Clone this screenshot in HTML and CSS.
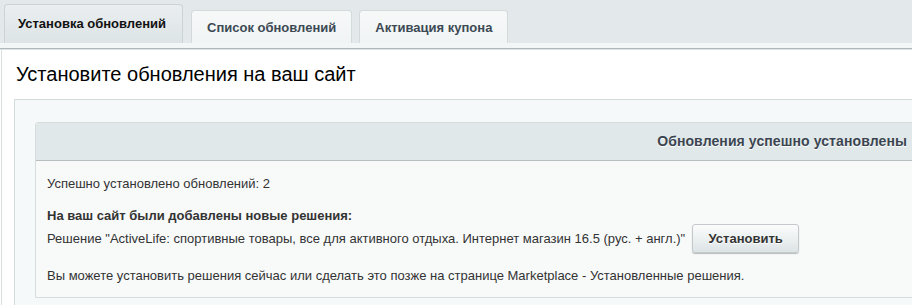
FILE: index.html
```html
<!DOCTYPE html>
<html lang="ru">
<head>
<meta charset="utf-8">
<title>Установка обновлений</title>
<link rel="stylesheet" href="styles.css">
</head>
<body>
<div class="tabs-bar">
  <div class="tab tab-active">Установка обновлений</div>
  <div class="tab">Список обновлений</div>
  <div class="tab">Активация купона</div>
</div>
<div class="tabs-strip"></div>
<div class="content">
  <h1 class="title">Установите обновления на ваш сайт</h1>
  <div class="outer-box">
    <div class="inner-box">
      <div class="inner-head">Обновления успешно установлены</div>
      <div class="inner-body">
        <p class="line">Успешно установлено обновлений: 2</p>
        <p class="line line-bold">На ваш сайт были добавлены новые решения:</p>
        <div class="solution-row">
          <span>Решение "ActiveLife: спортивные товары, все для активного отдыха. Интернет магазин 16.5 (рус. + англ.)"</span>
          <button class="btn" type="button">Установить</button>
        </div>
        <p class="line line-note">Вы можете установить решения сейчас или сделать это позже на странице Marketplace - Установленные решения.</p>
      </div>
    </div>
  </div>
</div>
</body>
</html>
```
FILE: styles.css
```css
html, body {
  margin: 0;
  padding: 0;
  background: #ffffff;
  font-family: "Liberation Sans", Arial, sans-serif;
  overflow: hidden;
}

.tabs-bar {
  display: flex;
  align-items: flex-end;
  gap: 7px;
  height: 43px;
  padding-left: 4px;
  background: #e3e9eb;
  box-sizing: border-box;
}

.tab {
  box-sizing: border-box;
  height: 33px;
  padding: 0 15px;
  display: flex;
  align-items: center;
  background: linear-gradient(#f7f9f9, #f1f4f4);
  border: 1px solid #d3dadc;
  border-bottom: none;
  border-radius: 4px 4px 0 0;
  font-size: 13px;
  font-weight: bold;
  color: #3c4954;
  white-space: nowrap;
}

.tab-active {
  height: 39px;
  width: 179px;
  padding: 0 12px 1px 13px;
  background: linear-gradient(#eaeef0, #dde4e6);
  border-color: #cbd3d5;
  color: #111;
  margin-right: 1px;
}

.tabs-strip {
  height: 5px;
  background: #f3f6f6;
  border-bottom: 1px solid #aeb7ba;
  box-shadow: 0 1px 0 #dfe4e5;
}

.content {
  margin-left: 1px;
  border-left: 1px solid #d9dfe0;
  padding-top: 1px;
}

.title {
  margin: 0;
  padding: 12px 0 0 14px;
  font-size: 20px;
  line-height: 24px;
  font-weight: normal;
  color: #000;
}

.outer-box {
  margin: 13px -30px 0 12px;
  padding: 22px 20px 8px 20px;
  background: #f5f9f9;
  border: 1px solid #d3dadb;
}

.inner-box {
  background: #f8fafa;
  border: 1px solid #d6dcdd;
  border-radius: 3px 3px 0 0;
}

.inner-head {
  height: 37px;
  line-height: 37px;
  padding-right: 13px;
  text-align: right;
  background: #e0e8ea;
  border-bottom: 1px solid #b6bec0;
  border-radius: 3px 3px 0 0;
  font-size: 14px;
  font-weight: bold;
  color: #3a4550;
  text-shadow: 0 1px 0 #fff;
  letter-spacing: 0.1px;
}

.inner-body {
  padding: 13px 11px 11px 11px;
  font-size: 13px;
  color: #333;
}

.line {
  margin: 0;
  line-height: 20px;
  white-space: nowrap;
}

.line-bold {
  margin-top: 14px;
  line-height: 16px;
  font-weight: bold;
}

.solution-row {
  display: flex;
  align-items: center;
  gap: 7px;
  white-space: nowrap;
}

.btn {
  box-sizing: border-box;
  height: 29px;
  width: 107px;
  padding: 0;
  border: 1px solid #c4cacc;
  border-radius: 3px;
  background: linear-gradient(#fbfcfc, #dde4e6);
  box-shadow: 0 1px 1px rgba(0, 0, 0, 0.25);
  font-family: "Liberation Sans", Arial, sans-serif;
  font-size: 13px;
  font-weight: bold;
  color: #333;
  text-shadow: 0 1px 0 #fff;
}

.line-note {
  margin-top: 13px;
}
```
